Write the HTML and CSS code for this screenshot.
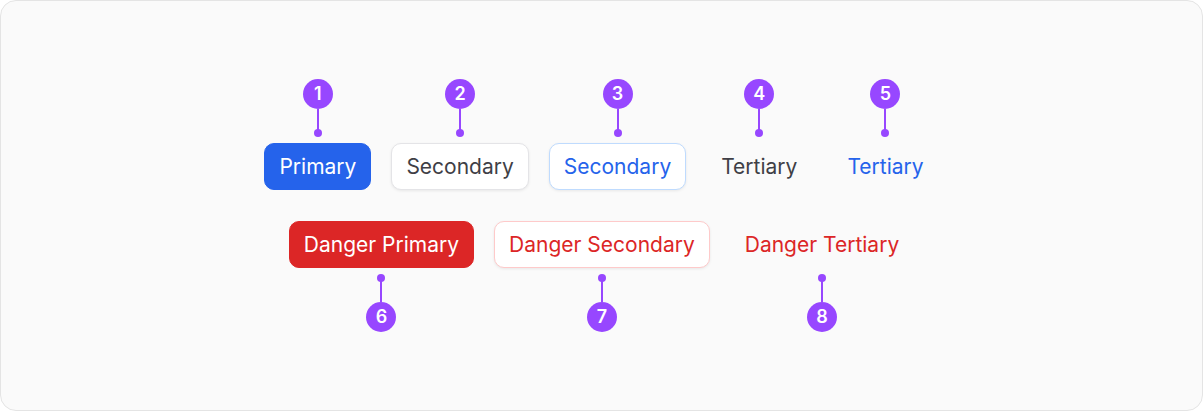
FILE: index.html
```html
<!DOCTYPE html>
<html lang="en">
<head>
<meta charset="utf-8">
<title>Button variants</title>
<link rel="stylesheet" href="styles.css">
</head>
<body>
<div class="frame">
  <div class="rows">
    <div class="row">
      <div class="item">
        <div class="marker"><span class="badge">1</span><span class="stem"></span><span class="dot"></span></div>
        <button class="btn btn-primary">Primary</button>
      </div>
      <div class="item">
        <div class="marker"><span class="badge">2</span><span class="stem"></span><span class="dot"></span></div>
        <button class="btn btn-secondary">Secondary</button>
      </div>
      <div class="item">
        <div class="marker"><span class="badge">3</span><span class="stem"></span><span class="dot"></span></div>
        <button class="btn btn-secondary-blue">Secondary</button>
      </div>
      <div class="item">
        <div class="marker"><span class="badge">4</span><span class="stem"></span><span class="dot"></span></div>
        <button class="btn btn-tertiary">Tertiary</button>
      </div>
      <div class="item">
        <div class="marker"><span class="badge">5</span><span class="stem"></span><span class="dot"></span></div>
        <button class="btn btn-tertiary-blue">Tertiary</button>
      </div>
    </div>
    <div class="row">
      <div class="item">
        <button class="btn btn-danger">Danger Primary</button>
        <div class="marker marker-below"><span class="dot"></span><span class="stem"></span><span class="badge">6</span></div>
      </div>
      <div class="item">
        <button class="btn btn-danger-secondary">Danger Secondary</button>
        <div class="marker marker-below"><span class="dot"></span><span class="stem"></span><span class="badge">7</span></div>
      </div>
      <div class="item">
        <button class="btn btn-danger-tertiary">Danger Tertiary</button>
        <div class="marker marker-below"><span class="dot"></span><span class="stem"></span><span class="badge">8</span></div>
      </div>
    </div>
  </div>
</div>
</body>
</html>
```
FILE: styles.css
```css
html, body {
  margin: 0;
  padding: 0;
  background: #ffffff;
}

body {
  font-family: Inter, "Noto Sans", "Liberation Sans", sans-serif;
}

.frame {
  box-sizing: border-box;
  width: 1203px;
  height: 411px;
  border: 1px solid #e4e4e4;
  border-radius: 16px;
  background: #fafafa;
  display: flex;
  align-items: center;
  justify-content: center;
}

.rows {
  display: flex;
  flex-direction: column;
  align-items: center;
  gap: 31px;
}

.row {
  display: flex;
  gap: 20px;
  align-items: flex-start;
}

.item {
  display: flex;
  flex-direction: column;
  align-items: center;
}

.marker {
  display: flex;
  flex-direction: column;
  align-items: center;
  margin-bottom: 6px;
}

.marker-below {
  margin-bottom: 0;
  margin-top: 6px;
}

.badge {
  width: 30px;
  height: 30px;
  border-radius: 50%;
  background: #9747ff;
  color: #ffffff;
  font-size: 18px;
  font-weight: 600;
  line-height: 30px;
  text-align: center;
}

.stem {
  width: 2px;
  height: 21px;
  background: #9747ff;
}

.dot {
  width: 8px;
  height: 8px;
  border-radius: 50%;
  background: #9747ff;
}

.marker .stem + .dot {
  margin-top: -1px;
}

.marker-below .dot + .stem {
  margin-top: -1px;
}

.btn {
  box-sizing: border-box;
  height: 47px;
  padding: 0 14px;
  border: 1px solid transparent;
  border-radius: 10px;
  background: transparent;
  font-family: Inter, "Noto Sans", "Liberation Sans", sans-serif;
  font-size: 21px;
  font-weight: 400;
  line-height: 24px;
  cursor: pointer;
}

.btn-primary {
  background: #2563eb;
  border-color: #2563eb;
  color: #ffffff;
}

.btn-secondary {
  background: #ffffff;
  border-color: #e4e4e7;
  color: #3f3f46;
  box-shadow: 0 1px 3px rgba(0, 0, 0, 0.08);
}

.btn-secondary-blue {
  background: #ffffff;
  border-color: #bfdbfe;
  color: #2563eb;
  box-shadow: 0 1px 3px rgba(0, 0, 0, 0.08);
}

.btn-tertiary {
  color: #3f3f46;
}

.btn-tertiary-blue {
  color: #2563eb;
}

.btn-danger {
  background: #dc2626;
  border-color: #dc2626;
  color: #ffffff;
}

.btn-danger-secondary {
  background: #ffffff;
  border-color: #fecaca;
  color: #dc2626;
  box-shadow: 0 1px 3px rgba(0, 0, 0, 0.08);
}

.btn-danger-tertiary {
  color: #dc2626;
}
```
